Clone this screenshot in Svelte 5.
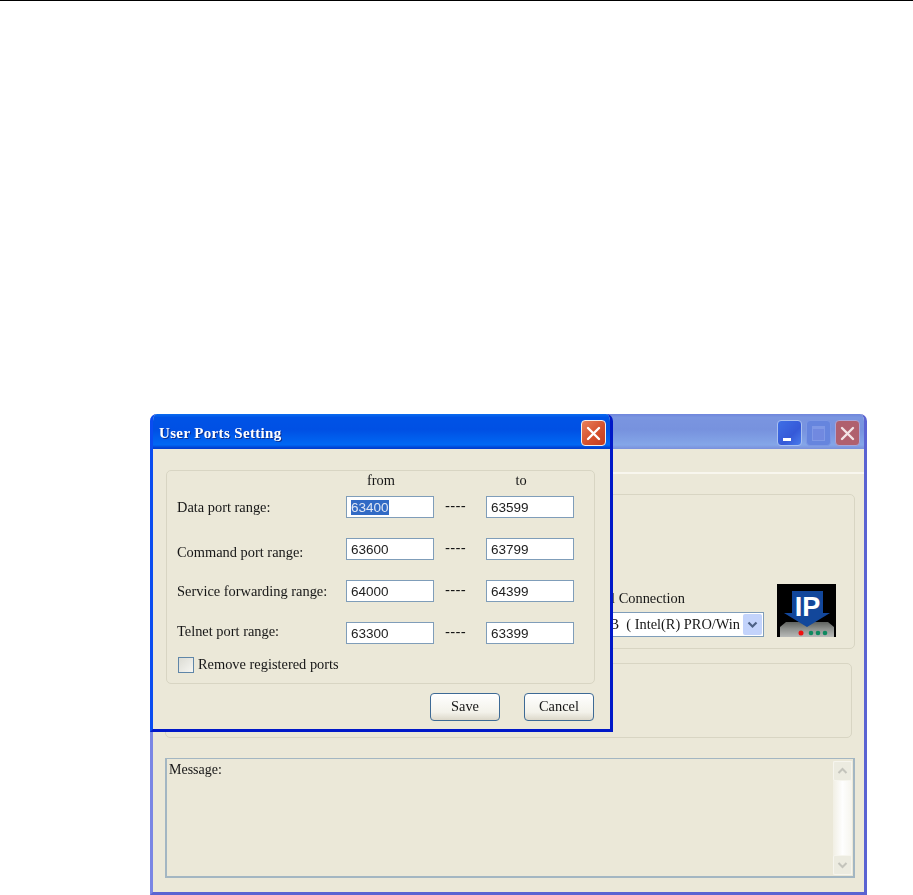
<script lang="ts">
  const rows = [
    { label: 'Data port range:', from: '63400', to: '63599', selected: true, nudge: '' },
    { label: 'Command port range:', from: '63600', to: '63799', selected: false, nudge: 'low' },
    { label: 'Service forwarding range:', from: '64000', to: '64399', selected: false, nudge: '' },
    { label: 'Telnet port range:', from: '63300', to: '63399', selected: false, nudge: 'high' },
  ];
</script>

<div class="page">
  <div class="rule"></div>

  <div class="desktop">
    <!-- main window, behind the dialog -->
    <section class="win back">
      <header class="bar back-bar">
        <div class="caps">
          <span class="cap min"><i></i></span>
          <span class="cap max"><i></i></span>
          <span class="cap close-dim">
            <svg width="15" height="15" viewBox="0 0 15 15" aria-hidden="true"><path d="M2 2l11 11M13 2L2 13" stroke="#f4e4e6" stroke-width="2.4" fill="none" stroke-linecap="round"/></svg>
          </span>
        </div>
      </header>
      <div class="back-body">
        <div class="menu-line"></div>
        <div class="group group-top">
          <div class="conn">
            <div class="conn-fields">
              <span class="conn-label">Local Connection</span>
              <div class="combo">
                <span class="combo-text">Ethernet MB&nbsp; ( Intel(R) PRO/Win</span>
                <span class="combo-btn">
                  <svg width="11" height="8" viewBox="0 0 11 8" aria-hidden="true"><path d="M1.5 1.5l4 4 4-4" stroke="#4d6185" stroke-width="2.2" fill="none"/></svg>
                </span>
              </div>
            </div>
            <svg class="ip" width="59" height="53" viewBox="0 0 59 53" aria-hidden="true">
              <rect width="59" height="53" fill="#000"/>
              <path d="M3 53v-10l6-5h42l6 5v10z" fill="url(#device)"/>
              <defs>
                <linearGradient id="device" x1="0" y1="0" x2="0" y2="1">
                  <stop offset="0" stop-color="#5f625f"/>
                  <stop offset="0.45" stop-color="#8d908d"/>
                  <stop offset="1" stop-color="#b8bab8"/>
                </linearGradient>
              </defs>
              <path d="M15 7h31v22h7L30 43 7 29h8z" fill="#12479b"/>
              <text x="30.5" y="32" class="ip-text">IP</text>
              <circle cx="24" cy="49" r="2.5" fill="#f01010"/>
              <circle cx="34" cy="49" r="2.3" fill="#0f8a5f"/>
              <circle cx="41" cy="49" r="2.3" fill="#0f8a5f"/>
              <circle cx="48" cy="49" r="2.3" fill="#0f8a5f"/>
            </svg>
          </div>
        </div>
        <div class="group group-mid"></div>
        <div class="message">
          <span>Message:</span>
          <div class="scroll">
            <span class="sb-btn">
              <svg width="11" height="8" viewBox="0 0 11 8" aria-hidden="true"><path d="M1.5 6l4-4 4 4" stroke="#c4c4bc" stroke-width="2" fill="none"/></svg>
            </span>
            <span class="sb-track"></span>
            <span class="sb-btn">
              <svg width="11" height="8" viewBox="0 0 11 8" aria-hidden="true"><path d="M1.5 2l4 4 4-4" stroke="#c4c4bc" stroke-width="2" fill="none"/></svg>
            </span>
          </div>
        </div>
      </div>
    </section>

    <!-- user ports dialog -->
    <section class="win dialog">
      <header class="bar dialog-bar">
        <span class="title">User Ports Setting</span>
        <span class="cap close">
          <svg width="15" height="15" viewBox="0 0 15 15" aria-hidden="true"><path d="M2 2l11 11M13 2L2 13" stroke="#fff" stroke-width="2.4" fill="none" stroke-linecap="round"/></svg>
        </span>
      </header>
      <div class="dialog-body">
        <div class="group ports">
          <div class="ports-head">
            <span class="col-head">from</span>
            <span class="col-head">to</span>
          </div>
          <div class="ports-grid">
            {#each rows as row}
              <span class="row-label {row.nudge}">{row.label}</span>
              <span class="field">
                {#if row.selected}<mark>{row.from}</mark>{:else}{row.from}{/if}
              </span>
              <span class="dash">----</span>
              <span class="field">{row.to}</span>
            {/each}
          </div>
          <div class="check-row">
            <span class="check"></span>
            <span>Remove registered ports</span>
          </div>
        </div>
        <div class="actions">
          <button type="button">Save</button>
          <button type="button">Cancel</button>
        </div>
      </div>
    </section>
  </div>
</div>

<style>
  :global(body) {
    margin: 0;
    background: #fff;
  }

  .page {
    width: 913px;
    height: 895px;
    overflow: hidden;
    font-family: "Liberation Serif", serif;
    font-size: 14.4px;
    color: #161616;
  }

  .rule {
    height: 1px;
    background: #000;
  }

  .desktop {
    position: relative;
    height: 894px;
    filter: blur(0.3px);
  }

  .win {
    position: absolute;
    top: 413px;
    box-sizing: border-box;
    display: flex;
    flex-direction: column;
    border-radius: 7px 7px 0 0;
    overflow: hidden;
    background: #ebe8d8;
  }

  .back {
    left: 150px;
    width: 717px;
    height: 481px;
    border-left: 3px solid #7a86e4;
    border-right: 3px solid #5a63d2;
    border-bottom: 3px solid #5a63d2;
  }

  .dialog {
    left: 150px;
    width: 463px;
    height: 318px;
    border-left: 3px solid #0a4cf0;
    border-right: 3px solid #0018c8;
    border-bottom: 3px solid #0018c8;
  }

  .bar {
    box-sizing: border-box;
    height: 35px;
    flex: none;
    margin: 0 -3px;
    padding-top: 3px;
    display: flex;
    align-items: center;
  }

  .back-bar {
    justify-content: flex-end;
    padding-right: 7px;
    background: linear-gradient(#6f86dc 0, #7a95e0 10%, #7792de 45%, #84a6e8 88%, #7a90dc 100%);
  }

  .dialog-bar {
    justify-content: space-between;
    padding-left: 9px;
    padding-right: 7px;
    background: linear-gradient(#0a6cf0 0, #0053e6 10%, #0050e4 45%, #0068f4 88%, #0044d4 96%, #003cd0 100%);
  }

  .title {
    color: #fff;
    font-weight: 700;
    font-size: 15px;
    letter-spacing: 0.35px;
    text-shadow: 1px 1px 0 #0f2f8c;
  }

  .caps {
    display: flex;
    gap: 4px;
  }

  .cap {
    box-sizing: border-box;
    width: 25px;
    height: 26px;
    display: flex;
    align-items: center;
    justify-content: center;
    border: 1px solid #dfe6f8;
    border-radius: 4px;
    position: relative;
  }

  .cap.min {
    background: linear-gradient(135deg, #3f6fe6, #3559d8 60%, #4a7cec);
    border-color: #a9c0f0;
  }

  .cap.min i {
    position: absolute;
    left: 5px;
    bottom: 4px;
    width: 8px;
    height: 3px;
    background: #fff;
  }

  .cap.max {
    background: #6685de;
    border-color: #7c97e4;
  }

  .cap.max i {
    width: 11px;
    height: 11px;
    border: 1px solid #7f98e6;
    border-top-width: 3px;
    background: #7189e0;
  }

  .cap.close-dim {
    background: #b0606e;
    border-color: #a9a6d8;
  }

  .cap.close {
    background: linear-gradient(135deg, #e8805c, #d5512c 55%, #c43c20);
    border-color: #f2efec;
  }

  .back-body {
    flex: 1;
    display: flex;
    flex-direction: column;
    padding: 23px 9px 0 12px;
  }

  .menu-line {
    height: 2px;
    margin: 0 -9px 20px -12px;
    background: #f8f6ee;
  }

  .group {
    box-sizing: border-box;
    border: 1px solid #d8d5c3;
    border-radius: 5px;
  }

  .group-top {
    height: 155px;
    display: flex;
    align-items: flex-end;
    justify-content: flex-end;
    padding: 0 18px 11px 0;
  }

  .group-mid {
    height: 75px;
    margin: 14px 3px 0 0;
  }

  .conn {
    display: flex;
    align-items: flex-end;
    gap: 13px;
  }

  .conn-fields {
    display: flex;
    flex-direction: column;
    gap: 5px;
  }

  .conn-label {
    text-align: right;
    padding-right: 79px;
  }

  .combo {
    box-sizing: border-box;
    width: 220px;
    height: 25px;
    display: flex;
    align-items: center;
    justify-content: flex-end;
    overflow: hidden;
    border: 1px solid #7f9db9;
    background: #fff;
  }

  .combo-text {
    white-space: nowrap;
    padding-right: 3px;
  }

  .combo-btn {
    flex: none;
    width: 19px;
    height: 21px;
    margin-right: 1px;
    display: flex;
    align-items: center;
    justify-content: center;
    background: #c3d3fb;
    border-radius: 2px;
  }

  .ip-text {
    font-family: "Liberation Sans", sans-serif;
    font-size: 27px;
    font-weight: 700;
    fill: #fff;
    text-anchor: middle;
  }

  .message {
    position: relative;
    box-sizing: border-box;
    height: 120px;
    margin-top: 20px;
    padding: 3px 2px;
    border-style: solid;
    border-width: 1px 2px 2px 2px;
    border-color: #a3b6c2;
    font-size: 14px;
  }

  .scroll {
    position: absolute;
    top: 2px;
    right: 1px;
    bottom: 1px;
    width: 19px;
    display: flex;
    flex-direction: column;
    background: linear-gradient(90deg, #f1efe4, #fefefe 50%, #f6f5ee);
  }

  .sb-btn {
    height: 20px;
    flex: none;
    display: flex;
    align-items: center;
    justify-content: center;
    background: #ecebe0;
    border: 1px solid #f6f5ee;
    box-sizing: border-box;
    border-radius: 2px;
  }

  .sb-track {
    flex: 1;
  }

  .dialog-body {
    flex: 1;
    display: flex;
    flex-direction: column;
    padding: 21px 15px 0 13px;
  }

  .ports {
    height: 214px;
    padding: 0 20px 0 10px;
  }

  .ports-head {
    height: 25px;
    display: grid;
    grid-template-columns: 169px 70px 70px 70px;
    line-height: 18px;
  }

  .col-head {
    text-align: center;
  }

  .col-head:first-child {
    grid-column: 2;
  }

  .col-head:last-child {
    grid-column: 4;
  }

  .ports-grid {
    display: grid;
    grid-template-columns: 169px 88px 52px 88px;
    grid-auto-rows: 22px;
    row-gap: 20px;
    align-items: center;
  }

  .row-label {
    white-space: nowrap;
  }

  .row-label.low {
    margin-top: 7px;
  }

  .row-label.high {
    margin-bottom: 4px;
  }

  .field {
    box-sizing: border-box;
    height: 22px;
    padding: 0 4px;
    display: flex;
    align-items: center;
    border: 1px solid #7f9db9;
    background: #fff;
    font-family: "Liberation Sans", sans-serif;
    font-size: 13.5px;
    color: #1c1c1c;
  }

  .field mark {
    background: #316ac5;
    color: #dfe6f4;
  }

  .dash {
    padding-right: 9px;
    text-align: center;
    font-family: "Liberation Sans", sans-serif;
    font-size: 15px;
    letter-spacing: 0.3px;
    margin-top: -4px;
  }

  .check-row {
    display: flex;
    align-items: center;
    gap: 4px;
    margin: 12px 0 0 1px;
  }

  .check {
    box-sizing: border-box;
    width: 16px;
    height: 16px;
    border: 1px solid #5f86a8;
    background: linear-gradient(135deg, #dcdcd4, #f6f6f2);
  }

  .actions {
    display: flex;
    justify-content: flex-end;
    gap: 24px;
    margin: 9px 1px 0 0;
  }

  button {
    width: 70px;
    height: 28px;
    padding: 0 0 2px;
    border: 1px solid #3d6a95;
    border-radius: 4px;
    background: linear-gradient(#fff, #f3f2ea 70%, #dcd8ca);
    font-family: "Liberation Serif", serif;
    font-size: 14.4px;
    color: #161616;
  }
</style>
